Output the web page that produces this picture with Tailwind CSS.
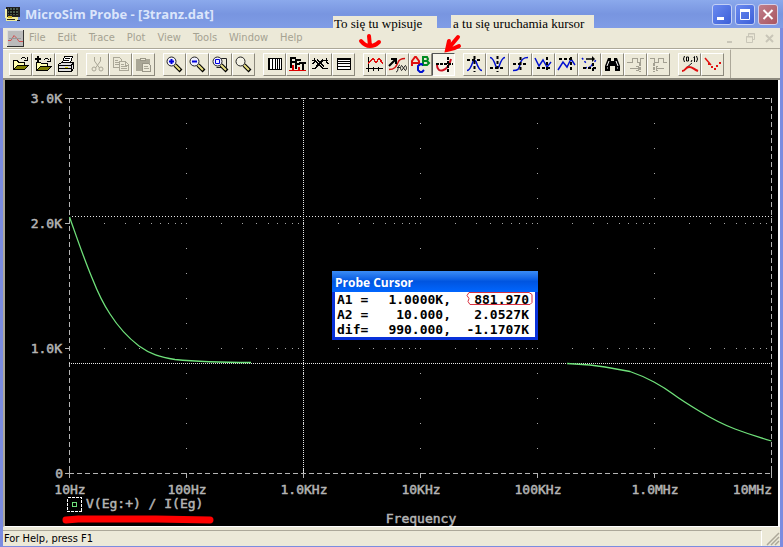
<!DOCTYPE html>
<html lang="en">
<head>
  <meta charset="UTF-8" />
  <meta name="viewport" content="width=device-width, initial-scale=1" />
  <title>MicroSim Probe - [3tranz.dat]</title>
  <script src="https://cdn.jsdelivr.net/npm/@tailwindcss/browser@4"></script>
</head>
<body class="h-screen overflow-hidden bg-[#7b8ce0] font-['DejaVu_Sans_Condensed','DejaVu_Sans',sans-serif] text-[11px] text-black">
  <div class="relative flex h-full flex-col px-[3px] pb-px">

    <!-- title bar -->
    <header class="-mx-[3px] flex h-7 shrink-0 items-center bg-linear-to-b from-[#8ba9ec] via-[#7895e0] to-[#809ce6] pr-[5px] pl-[5px]">
      <svg class="size-4" viewBox="0 0 16 16" shape-rendering="crispEdges">
        <path d="M1 1h14v10H1z" fill="#222"/><path d="M3 2h10v7H3z" fill="#4a5a4a"/>
        <path d="M4 2v7M7 2v7M10 2v7M3 4h10M3 7h10" stroke="#111"/>
        <path d="M0 3h2v9H0z" fill="#f4f0b0"/><path d="M1 11h12v4H1z" fill="#f0ec98"/>
        <path d="M2 13h8M12 14h3" stroke="#222"/><path d="M3 11h4" stroke="#d0b020" stroke-width="2"/>
      </svg>
      <h1 class="ml-1 flex-1 font-['Open_Sans','Noto_Sans',sans-serif] text-[13px] leading-5 font-bold text-[#dbe5fb]">MicroSim Probe - [3tranz.dat]</h1>
      <div class="flex gap-[3px]">
        <button aria-label="Minimize" class="h-[21px] w-5 rounded-[3px] border border-[#c3d0f5] bg-linear-to-br from-[#6b8af0] to-[#3c5fd8]">
          <svg class="h-[19px] w-[18px]" viewBox="0 0 18 19"><path d="M4 13.5h7" stroke="#fff" stroke-width="3"/></svg>
        </button>
        <button aria-label="Maximize" class="h-[21px] w-5 rounded-[3px] border border-[#c3d0f5] bg-linear-to-br from-[#6b8af0] to-[#3c5fd8]">
          <svg class="h-[19px] w-[18px]" viewBox="0 0 18 19" fill="none" stroke="#fff"><path d="M4.500 4.500h9v10h-9z"/><path d="M4 5.500h10" stroke-width="3"/></svg>
        </button>
        <button aria-label="Close" class="h-[21px] w-5 rounded-[3px] border border-[#d5cfe8] bg-linear-to-br from-[#c07f8c] to-[#a95560]">
          <svg class="h-[19px] w-[18px]" viewBox="0 0 18 19"><path d="M4.500 5l9 9m0-9l-9 9" stroke="#fff" stroke-width="2"/></svg>
        </button>
      </div>
    </header>

    <!-- menu bar -->
    <nav class="flex h-5 shrink-0 items-center bg-[#ece9d8] pr-1 pl-1 text-[#a5a292]">
      <svg class="mr-[5px] size-[17px]" viewBox="0 0 17 17">
        <path d="M0 0h17v17H0z" fill="#bbb"/><path d="M0 .5h17M.5 0v17" stroke="#ddd"/><path d="M0 16.500h17M16.500 0v17" stroke="#333"/>
        <path d="M1 10.500h3l3-5 3 3 2 3h4" fill="none" stroke="#d05050"/><path d="M2 8.500h12" stroke="#999"/>
      </svg>
      <div class="flex flex-1 gap-3">
        <button>File</button>
        <button>Edit</button>
        <button>Trace</button>
        <button>Plot</button>
        <button>View</button>
        <button>Tools</button>
        <button>Window</button>
        <button>Help</button>
      </div>
      <div class="flex gap-2">
        <button aria-label="Minimize document"><svg class="size-3" viewBox="0 0 12 12"><path d="M3 10h5" stroke="#c9c6b8" stroke-width="2"/></svg></button>
        <button aria-label="Restore document"><svg class="size-3" viewBox="0 0 12 12" fill="none" stroke="#c9c6b8"><path d="M4.500 4V1.500h6v6H9M4 2h7M2.500 4.500h6v6h-6zM2 5h7"/></svg></button>
        <button aria-label="Close document"><svg class="size-3" viewBox="0 0 12 12"><path d="M2 3l7 7m0-7l-7 7" stroke="#c9c6b8" stroke-width="2"/></svg></button>
      </div>
    </nav>

    <!-- toolbar -->
    <div class="flex h-[32px] shrink-0 border-t border-b-2 border-t-[#aca899] border-b-[#8d8a7e] bg-[#ece9d8]">
      <div role="toolbar" class="flex gap-2 border-t border-r border-t-white border-r-[#aca899] pt-[3px] pr-[6px] pl-[6px] *:flex *:h-[23px] [&_button]:size-[23px] [&_button]:border [&_button]:border-t-white [&_button]:border-r-[#8c897c] [&_button]:border-b-[#8c897c] [&_button]:border-l-white [&_svg]:size-[21px] [&_svg]:fill-none">
        <div>
          <button aria-label="Open"><svg viewBox="0 0 21 21" shape-rendering="crispEdges"><path d="M3.500 15.500v-9h4l1 2h6v3" fill="#ffffb0" stroke="#000"/><path d="M3.500 15.500l4-4h11l-4 4z" fill="#808000" stroke="#000"/><path d="M11 4.500h1M12 3.500h3M15 4.500h1M17.500 3v4M14 6.500h4" stroke="#000"/></svg></button>
          <button aria-label="Append"><svg viewBox="0 0 21 21" shape-rendering="crispEdges"><path d="M3.500 16.500v-8h4l1 1h6v3" fill="#ffffb0" stroke="#000"/><path d="M3.500 16.500l4-4h11l-4 4z" fill="#808000" stroke="#000"/><path d="M2 5h6M5 2v6" stroke="#000" stroke-width="2"/><path d="M11 5.500h1M12 4.500h3M15 5.500h1M17.500 4v4M14 7.500h4" stroke="#000"/></svg></button>
          <button aria-label="Print"><svg viewBox="0 0 21 21" shape-rendering="crispEdges"><path d="M6.500 8.500l2-6h8l-2 6" fill="#fff" stroke="#000"/><path d="M9 4.500h5M8 6.500h5" stroke="#000"/><path d="M2.500 10.500l3-2h12v6l-2 3h-13z" fill="#ddd" stroke="#000"/><path d="M3 11.500h12l2-2M15.500 12v5M3 14.500h12" stroke="#000"/><path d="M9 13.500h3" stroke="#d8d000"/></svg></button>
        </div>
        <div>
          <button aria-label="Cut"><svg viewBox="0 0 21 21" stroke="#aaa797"><path d="M7.500 3v4l5 7M13.500 3v4l-5 7"/><circle cx="7" cy="15" r="2"/><circle cx="14" cy="15" r="2"/></svg></button>
          <button aria-label="Copy"><svg viewBox="0 0 21 21" stroke="#aaa797" shape-rendering="crispEdges"><path d="M3.500 3.500h6l2 2v8h-8zM5 6.500h3M5 8.500h4M5 10.500h4"/><path d="M9.500 7.500h6l3 3v6h-9z" fill="#ece9d8"/><path d="M11 10.500h3M11 12.500h6M11 14.500h6M15.500 8v3h3"/></svg></button>
          <button aria-label="Paste"><svg viewBox="0 0 21 21" shape-rendering="crispEdges"><path d="M3 5h14v12H3z" fill="#aaa797"/><path d="M7.500 4.500h5v2h-5z" fill="#ece9d8" stroke="#999687"/><path d="M9.500 9.500h6l2 2v6h-8z" fill="#ece9d8" stroke="#999687"/><path d="M11 12.500h4M11 14.500h5" stroke="#aaa797"/></svg></button>
        </div>
        <div>
          <button aria-label="Zoom in"><svg viewBox="0 0 21 21"><path d="M11 11l6 6" stroke="#000" stroke-width="4"/><path d="M11 11l5 5" stroke="#e8e080" stroke-width="2"/><circle cx="7.500" cy="7.500" r="4.500" fill="#eef" stroke="#222"/><path d="M5 7.500h5M7.500 5v5" stroke="#00d" stroke-width="2"/></svg></button>
          <button aria-label="Zoom out"><svg viewBox="0 0 21 21"><path d="M11 11l6 6" stroke="#000" stroke-width="4"/><path d="M11 11l5 5" stroke="#e8e080" stroke-width="2"/><circle cx="7.500" cy="7.500" r="4.500" fill="#eef" stroke="#222"/><path d="M5 7.500h5" stroke="#00d" stroke-width="2"/></svg></button>
          <button aria-label="Zoom area"><svg viewBox="0 0 21 21"><path d="M8.500 4.500h8v9h-10" stroke="#222"/><path d="M11 11l6 6" stroke="#000" stroke-width="4"/><path d="M11 11l5 5" stroke="#e8e080" stroke-width="2"/><circle cx="7.500" cy="7.500" r="4.500" fill="#eef" stroke="#222"/><path d="M5.500 5.500h4v4h-4z" stroke="#00d"/></svg></button>
          <button aria-label="Zoom fit"><svg viewBox="0 0 21 21"><path d="M11 11l6 6" stroke="#000" stroke-width="4"/><path d="M11 11l5 5" stroke="#e8e080" stroke-width="2"/><circle cx="7.500" cy="7.500" r="4.500" fill="#f4f2e6" stroke="#222"/></svg></button>
        </div>
        <div>
          <button aria-label="Log X axis"><svg viewBox="0 0 21 21" stroke="#000" shape-rendering="crispEdges"><path d="M4.500 4.500h13v11h-13z" fill="#fff"/><path d="M5.500 4v12M8.500 4v12M11.500 4v12M13.500 4v12M15.500 4v12M17 4v12"/></svg></button>
          <button aria-label="Fourier"><svg viewBox="0 0 21 21" shape-rendering="crispEdges"><path d="M3 3h6v2H5v2h3v2H5v5H3zM8 5h6v2h-4v2h3v2h-3v4H8zM12 8h7v2h-2v6h-2v-6h-3z" fill="#000"/><path d="M2 16.500h3v-5h1v5h5v-3h1v3h7" stroke="#d00"/></svg></button>
          <button aria-label="Performance analysis"><svg viewBox="0 0 21 21" stroke="#000" shape-rendering="crispEdges"><path d="M2 6.500h3l8 8h5M2 14.500h3l8-8h5M4.500 4v4l-2 2M16.500 4v4l2 2M7 5.500l7 7M6 12.500l7-7"/></svg></button>
          <button aria-label="Log Y axis"><svg viewBox="0 0 21 21" stroke="#000" shape-rendering="crispEdges"><path d="M4.500 4.500h13v11h-13z" fill="#fff"/><path d="M4 5.500h13M4 7.500h13M4 9.500h13M4 12.500h13"/></svg></button>
        </div>
        <div>
          <button aria-label="Add trace"><svg viewBox="0 0 21 21" shape-rendering="crispEdges"><path d="M4.500 3v15M2 14.500h17M9.500 13v4M14.500 13v4" stroke="#000"/><path d="M4 9.500l5-5 3 4 3-4 4 5" stroke="#e01010" stroke-width="1.500"/></svg></button>
          <button aria-label="Eval function"><svg viewBox="0 0 21 21"><path d="M2 15.500c6 0 7-3 9-7 1-3 3-4 7-4" stroke="#d01010" stroke-width="1.500"/><path d="M2 12l6-6M4 5h5v5" stroke="#000" stroke-width="2"/><path d="M9 18c3 0 1-7 4-7M10 13.500h3M15 11c-2 2-2 4 0 6M18 11c2 2 2 4 0 6M15 12l3 4m0-4l-3 4" stroke="#222"/></svg></button>
          <button aria-label="Text label"><svg viewBox="0 0 21 21"><path d="M2 12V7l3-4h1l3 4v5M3 9h5" stroke="#e01010" stroke-width="2"/><path d="M13 3v8h4l2-2-2-2 1-2-1-2zM13 7h4" stroke="#008a20" stroke-width="2"/><path d="M13 11l-2-1-3 2v4l2 2h2l2-2" stroke="#0010d0" stroke-width="2"/></svg></button>
          <button aria-label="Toggle cursor" aria-pressed="true" class="border-t-[#555]! border-r-white! border-b-white! border-l-[#555]! bg-[#f6f4ea]"><svg viewBox="0 0 21 21"><path d="M4 11c0 9 11 7 14-6" stroke="#d01020" stroke-width="2"/><path d="M3 10h17" stroke="#000" stroke-width="2" stroke-dasharray="3 1"/><path d="M15 3v15" stroke="#000" stroke-width="2" stroke-dasharray="3 1"/></svg></button>
        </div>
        <div>
          <button aria-label="Cursor peak"><svg viewBox="0 0 21 21"><path d="M3 16.500c3 0 5-6 6-9l1-1h1l1 1c1 3 3 9 6 9" stroke="#0010d0" stroke-width="1.500"/><path d="M3 6h15M10.500 2v16" stroke="#000" stroke-width="2" stroke-dasharray="3 2"/></svg></button>
          <button aria-label="Cursor trough"><svg viewBox="0 0 21 21"><path d="M3 3.500c3 0 5 6 6 9l1 1h1l1-1c1-3 3-9 6-9" stroke="#0010d0" stroke-width="1.500"/><path d="M3 14h15M10.500 2v16" stroke="#000" stroke-width="2" stroke-dasharray="3 2"/></svg></button>
          <button aria-label="Cursor slope"><svg viewBox="0 0 21 21"><path d="M3 16.500c5 0 6-1 7-6s3-7 8-7" stroke="#0010d0" stroke-width="1.500"/><path d="M3 10h15M10.500 3v15" stroke="#000" stroke-width="2" stroke-dasharray="3 2"/></svg></button>
          <button aria-label="Cursor min"><svg viewBox="0 0 21 21"><path d="M2 4l4 8 4-6 4 7 4-5" stroke="#0010d0" stroke-width="1.500"/><path d="M4 14h15M14 3v15" stroke="#000" stroke-width="2" stroke-dasharray="3 2"/></svg></button>
          <button aria-label="Cursor max"><svg viewBox="0 0 21 21"><path d="M2 16l5-8 4 5 4-8 4 6" stroke="#0010d0" stroke-width="1.500"/><path d="M3 5h15M15 3v15" stroke="#000" stroke-width="2" stroke-dasharray="3 2"/></svg></button>
          <button aria-label="Cursor point"><svg viewBox="0 0 21 21"><path d="M3 4l4 5M6 14l5-1 6-7M12 11l6 5" stroke="#0010d0" stroke-width="1.500" stroke-dasharray="2 2"/><path d="M7 5h7" stroke="#000" stroke-width="1.500"/><path d="M13 2l3 3-3 3z" fill="#000"/><path d="M4 14h14M14 9v8" stroke="#000" stroke-dasharray="3 2" stroke-width="2"/></svg></button>
          <button aria-label="Cursor search"><svg viewBox="0 0 21 21"><path d="M6 4h3v3h3V4h3l3 8v5h-5v-5h-5v5H3v-5z" fill="#000"/><path d="M7 7l-2 5M14 7l2 5M5 14h1M15 14h1" stroke="#fff"/></svg></button>
          <button aria-label="Next transition"><svg viewBox="0 0 21 21" stroke="#a3a092" shape-rendering="crispEdges"><path d="M2 8.500h5v-4h5v4h3v-4h4M5 14.500h8M11 12.500h2v4h-2"/><path d="M15 9v9" stroke-width="2" stroke-dasharray="3 1"/></svg></button>
          <button aria-label="Previous transition"><svg viewBox="0 0 21 21" stroke="#a3a092" shape-rendering="crispEdges"><path d="M2 4.500h4v4h4v-4h5v4h4M8 14.500h8M10 12.500H8v4h2"/><path d="M6 9v9" stroke-width="2" stroke-dasharray="3 1"/></svg></button>
        </div>
        <div>
          <button aria-label="Mark label"><svg viewBox="0 0 21 21"><path d="M5.500 2q-2 3 0 6M17.500 2q2 3 0 6M7.500 3h2v4h-2zM12 8l1-2M14.500 3.500l1-1V8" stroke="#000"/><path d="M13 9l-7 6" stroke="#222"/><path d="M3 17c4 0 3-4 7-4s4 2 9 4" stroke="#e01010" stroke-width="2"/></svg></button>
          <button aria-label="Mark data points"><svg viewBox="0 0 21 21" stroke="#e01010"><path d="M3 4l6 7" stroke-width="1.500"/><path d="M9 13h2M12 15h2M14 12h2M17 9h2M6 10h2" stroke-width="2"/></svg></button>
        </div>
      </div>
    </div>

    <!-- probe plot -->
    <main class="relative min-h-0 flex-1 border-b border-l-2 border-r-2 border-b-white border-l-[#aca899] border-r-white bg-black">
      <svg class="h-full w-full font-['DejaVu_Sans_Mono',monospace] text-[13px]" viewBox="5 80 773 446" preserveAspectRatio="xMinYMin meet">
        <g fill="none" stroke="#b4b4b4" shape-rendering="crispEdges">
          <path d="M69 98.500h703M69 473.500h703M69.500 98v376M771.500 98v376" stroke-dasharray="5 3"/>
          <path d="M65 98.500h8M65 223.500h5M65 348.500h5M65 473.500h8M69.500 469v9M186.500 473v5M303.500 469v9M420.500 473v5M537.500 473v5M654.500 473v5M771.500 469v9"/>
        </g>
        <g id="grid" fill="#a8a8a8" shape-rendering="crispEdges"></g>
        <g fill="none" stroke="#e8e8e8" shape-rendering="crispEdges">
          <path d="M303.500 98v376M69 363.500h703" stroke-dasharray="1 1"/>
          <path d="M72 216.500h700" stroke-dasharray="1 2"/>
        </g>
        <g fill="none" stroke="#6fe07a" stroke-width="1.300">
          <path d="M69.500 217C77 238 84 259 92.500 279C98 293 104 305 110 314C117 325 126 336 139 346C150 354 160 357 175 359.500C195 361.500 220 362.500 251 362.500"/>
          <path d="M567 363.500L590 365L605 367L630 371.500Q643 376 654 382T673 394T700 411.500T735 429T771.500 441"/>
        </g>
        <g fill="#b4b4b4" stroke="#b4b4b4" stroke-width=".5">
          <g text-anchor="end">
            <text x="62" y="103">3.0K</text>
            <text x="62" y="228">2.0K</text>
            <text x="62" y="353">1.0K</text>
            <text x="63" y="478">0</text>
            <text x="772" y="494">10MHz</text>
          </g>
          <g text-anchor="middle">
            <text x="70" y="494">10Hz</text>
            <text x="187" y="494">100Hz</text>
            <text x="304" y="494">1.0KHz</text>
            <text x="421" y="494">10KHz</text>
            <text x="538" y="494">100KHz</text>
            <text x="655" y="494">1.0MHz</text>
            <text x="421" y="523">Frequency</text>
          </g>
          <text x="86" y="508">V(Eg:+) / I(Eg)</text>
        </g>
        <path d="M67.500 497.500h14v14h-14z" fill="none" stroke="#fff" stroke-dasharray="3 1" shape-rendering="crispEdges"/>
        <path d="M72.500 502.500h4v4h-4z" fill="none" stroke="#6fe07a" shape-rendering="crispEdges"/>
        <path d="M66 520l12-1h78l54 1" fill="none" stroke="#f00" stroke-width="7" stroke-linecap="round"/>
      </svg>

      <!-- cursor window -->
      <section class="absolute top-[191px] left-[327px] w-[206px] border-[3px] border-t-0 border-[#0831d9] bg-white">
        <h2 class="-mx-[3px] h-[21px] bg-linear-to-b from-[#3a8cf5] via-[#0055e0] to-[#0066ff] pl-[3px] font-['Open_Sans','Noto_Sans',sans-serif] text-[12px] leading-[23px] font-bold text-white">Probe Cursor</h2>
        <table class="relative w-full font-['DejaVu_Sans_Mono',monospace] text-[13px] leading-[15px] font-bold">
          <tr><th scope="row" class="w-9 pl-0.5 text-left whitespace-pre">A1 =</th><td class="w-20 text-right">1.0000K,</td><td class="pr-1.5 text-right">881.970</td></tr>
          <tr><th scope="row" class="pl-0.5 text-left whitespace-pre">A2 =</th><td class="text-right">10.000,</td><td class="pr-1.5 text-right">2.0527K</td></tr>
          <tr><th scope="row" class="pl-0.5 text-left whitespace-pre">dif=</th><td class="text-right">990.000,</td><td class="pr-1.5 text-right">-1.1707K</td></tr>
        </table>
        <svg class="absolute top-[20px] right-0 h-[15px] w-[70px]" viewBox="0 0 70 15" fill="none" stroke="#d83040"><path d="M4 1.500h60l3 2v8l-2 2H5l-2-3 1-3-2-3 2-3"/></svg>
      </section>
    </main>

    <!-- status bar -->
    <footer class="flex h-[19px] shrink-0 gap-1 bg-[#ece9d8] pt-[3px]">
      <p class="flex-1 border-t border-r border-t-[#aca899] border-r-white pl-px leading-4">For Help, press F1</p>
      <svg class="h-4 w-[14px]" viewBox="0 0 14 16" stroke="#aca899" stroke-width="1.500"><path d="M1 15L13 3M5 15l8-8M9 15l4-4"/></svg>
    </footer>

    <!-- hand-written notes over the toolbar -->
    <p class="absolute top-4 left-[333px] h-[14px] w-[104px] bg-[#ece9d8] pl-px font-['Liberation_Serif',serif] text-[13px] leading-[15px] whitespace-nowrap">To się tu wpisuje</p>
    <p class="absolute top-[15px] left-[451px] h-[15px] w-[143px] bg-[#ece9d8] pl-0.5 font-['Liberation_Serif',serif] text-[13px] leading-[17px] whitespace-nowrap">a tu się uruchamia kursor</p>
    <svg class="pointer-events-none absolute top-8 left-[355px] h-6 w-28" viewBox="355 32 112 24" fill="none" stroke="#f00" stroke-width="4" stroke-linecap="round">
      <path d="M369 36l1 10M361 41q4 5 9 5q5 0 9-4"/>
      <path d="M458 37l-10 12M449 41l-2 9q7-1 12-4"/>
    </svg>
  </div>

  <script>
    // minor grid dots: 8 per decade across, 4 per division down
    const grid = document.getElementById('grid');
    let dots = '';
    for (let d = 0; d < 6; d++) {
      for (let n = 2; n < 10; n++) {
        const x = Math.round(69 + 117 * (d + Math.log10(n)));
        dots += `<rect x="${x}" y="223" width="1" height="1"/><rect x="${x}" y="348" width="1" height="1"/>`;
      }
      if (d > 0) {
        for (let y = 123; y < 473; y += 25) {
          dots += `<rect x="${69 + 117 * d}" y="${y}" width="1" height="1"/>`;
        }
      }
    }
    grid.innerHTML = dots;
  </script>
</body>
</html>
